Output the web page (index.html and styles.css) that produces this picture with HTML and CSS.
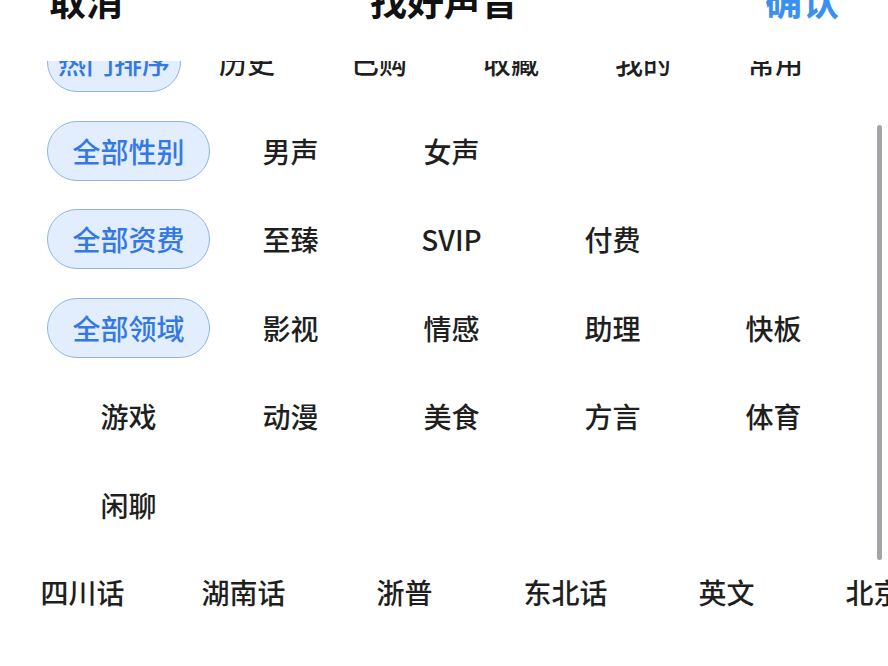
FILE: index.html
```html
<!DOCTYPE html>
<html lang="zh-CN">
  <head>
    <meta charset="UTF-8" />
    <title>找好声音</title>
    <link rel="stylesheet" href="styles.css">
  </head>
  <body>
    <div class="sheet">
      <div class="header">
        <span class="header-btn">取消</span>
        <span class="header-title">找好声音</span>
        <span class="header-btn confirm">确认</span>
      </div>

      <div class="scroll">
        <div class="scroll-inner">
          <!-- 排序 -->
          <div class="sort-row">
            <span class="chip active">热门排序</span>
            <span class="chip">历史</span>
            <span class="chip">已购</span>
            <span class="chip">收藏</span>
            <span class="chip">我的</span>
            <span class="chip">常用</span>
          </div>

          <div class="filters">
            <div class="filter-group">
              <span class="chip active">全部性别</span>
              <span class="chip">男声</span>
              <span class="chip">女声</span>
            </div>

            <div class="filter-group">
              <span class="chip active">全部资费</span>
              <span class="chip">至臻</span>
              <span class="chip">SVIP</span>
              <span class="chip">付费</span>
            </div>

            <div class="filter-group">
              <span class="chip active">全部领域</span>
              <span class="chip">影视</span>
              <span class="chip">情感</span>
              <span class="chip">助理</span>
              <span class="chip">快板</span>
              <span class="chip">游戏</span>
              <span class="chip">动漫</span>
              <span class="chip">美食</span>
              <span class="chip">方言</span>
              <span class="chip">体育</span>
              <span class="chip">闲聊</span>
            </div>
          </div>

          <!-- 方言横向滚动 -->
          <div class="dialect-row">
            <span class="chip">四川话</span>
            <span class="chip">湖南话</span>
            <span class="chip">浙普</span>
            <span class="chip">东北话</span>
            <span class="chip">英文</span>
            <span class="chip">北京话</span>
          </div>
        </div>

        <div class="scrollbar"></div>
      </div>
    </div>
  </body>
</html>
```

FILE: styles.css
```css
body {
  margin: 0;
  background-color: #ffffff;
  font-family: "Noto Sans CJK SC", "Noto Sans", sans-serif;
  color: #1c1c1e;
  overflow: hidden;
}

.sheet {
  width: 888px;
  height: 666px;
  overflow: hidden;
  background: #fff;
}

/* Header */
.header {
  height: 61px;
  display: flex;
  justify-content: space-between;
  align-items: flex-start;
  padding: 0 49px 0 49px;
  box-sizing: border-box;
  overflow: hidden;
}

.header span {
  font-size: 37px;
  font-weight: 700;
  line-height: 37px;
  margin-top: -18px;
  color: #111;
}

.header .confirm {
  color: #3a8ff0;
}

/* Scroll area */
.scroll {
  position: relative;
  height: 605px;
  overflow: hidden;
}

.scroll-inner {
  margin-top: -29px;
}

.chip {
  height: 60px;
  display: flex;
  align-items: center;
  justify-content: center;
  font-size: 28px;
  font-weight: 500;
  color: #1f1f1f;
  border: 1px solid transparent;
  border-radius: 30px;
  box-sizing: border-box;
  white-space: nowrap;
}

.chip.active {
  background-color: #e2edfd;
  border-color: #8fb3ea;
  color: #3479e3;
}

.sort-row {
  display: grid;
  grid-template-columns: 134px repeat(5, 132px);
  padding-left: 47px;
}

.filters {
  display: flex;
  flex-direction: column;
  gap: 28.5px;
  margin-top: 28.5px;
  padding-left: 47px;
}

.filter-group {
  display: grid;
  grid-template-columns: 163px repeat(4, 161px);
  row-gap: 28.5px;
}

.dialect-row {
  display: flex;
  margin-top: 27px;
  padding-left: 2px;
}

.dialect-row .chip {
  flex: 0 0 161px;
}

.scrollbar {
  position: absolute;
  top: 64px;
  right: 6px;
  width: 5px;
  height: 435px;
  border-radius: 3px;
  background-color: #a4a4a8;
}
```
